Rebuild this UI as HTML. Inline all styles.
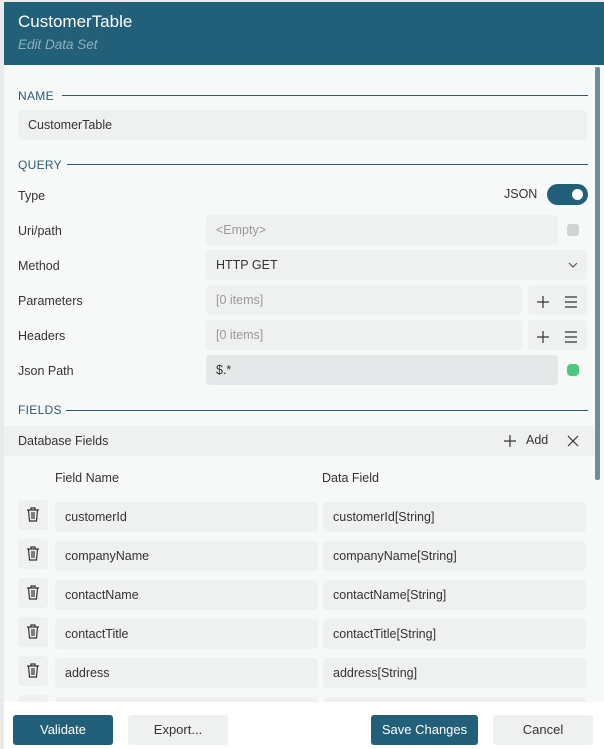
<!DOCTYPE html>
<html><head><style>
*{box-sizing:border-box;margin:0;padding:0}
body{width:604px;height:749px;background:#e9ebeb;font-family:"Liberation Sans",sans-serif;font-size:12.5px;color:#333;position:relative;overflow:hidden}
.dlg{position:absolute;left:4px;top:2px;width:600px;height:747px;background:#f7f9f9}
.hdr{position:absolute;left:0;top:0;width:600px;height:63px;background:#225f78}
.t1{position:absolute;left:14px;top:10px;color:#fff;font-size:17px}
.t2{position:absolute;left:14px;top:35px;color:#8fb0bf;font-size:13.5px;font-style:italic}
.a{position:absolute}
.sec{position:absolute;left:14px;font-size:12px;color:#2c5a6c;letter-spacing:.3px}
.line{position:absolute;height:1px;background:#2c5a6c}
.in{position:absolute;background:#eff1f1;border-radius:4px;padding-left:10px;line-height:30px;height:30px;color:#333}
.lbl{position:absolute;left:14px;color:#333}
.ph{color:#999}
.btn{position:absolute;top:713px;height:30px;border-radius:3px;line-height:30px;text-align:center;font-size:13px}
</style></head><body>
<div class="dlg">
<div class="hdr"><div class="t1">CustomerTable</div><div class="t2">Edit Data Set</div></div>
<div class="a" style="left:591px;top:65px;width:5px;height:413px;background:#6f8d99;border-radius:2px"></div>
<div class="sec" style="top:87px">NAME</div><div class="line" style="left:58px;top:93px;width:526px"></div>
<div class="in" style="left:14px;top:108px;width:569px">CustomerTable</div>
<div class="sec" style="top:156px">QUERY</div><div class="line" style="left:63px;top:162px;width:521px"></div>
<div class="lbl" style="top:187px">Type</div>
<div class="a" style="left:500px;top:185px">JSON</div>
<div class="a" style="left:543px;top:182px;width:41px;height:21px;border-radius:11px;background:#225f78"><div class="a" style="left:25px;top:5px;width:11px;height:11px;border-radius:50%;background:#fff"></div></div>
<div class="lbl" style="top:222px">Uri/path</div>
<div class="in" style="left:202px;top:213px;width:352px"><span class="ph">&lt;Empty&gt;</span></div>
<div class="a" style="left:563px;top:222px;width:12px;height:12px;border-radius:3px;background:#cfd3d4"></div>
<div class="lbl" style="top:257px">Method</div>
<div class="in" style="left:202px;top:248px;width:381px">HTTP GET<svg class="a" style="left:362px;top:11px" width="10" height="8"><path d="M1 2l4 4 4-4" fill="none" stroke="#555" stroke-width="1.2"/></svg></div>
<div class="lbl" style="top:292px">Parameters</div>
<div class="in" style="left:202px;top:283px;width:316px"><span class="ph">[0 items]</span></div>
<div class="in" style="left:524px;top:283px;width:59px"></div>
<div class="lbl" style="top:327px">Headers</div>
<div class="in" style="left:202px;top:318px;width:316px"><span class="ph">[0 items]</span></div>
<div class="in" style="left:524px;top:318px;width:59px"></div>
<svg class="a" style="left:530px;top:289px" width="50" height="60"><g stroke="#333" stroke-width="1.2"><path d="M9 5v12M3 11h12M31 6h12M31 11h12M31 16h12"/><path d="M9 40v12M3 46h12M31 41h12M31 46h12M31 51h12"/></g></svg>
<div class="lbl" style="top:362px">Json Path</div>
<div class="in" style="left:202px;top:353px;width:352px;background:#e4e8e9">$.*</div>
<div class="a" style="left:563px;top:362px;width:12px;height:12px;border-radius:4px;background:#4cc97b"></div>
<div class="sec" style="top:401px">FIELDS</div><div class="line" style="left:62px;top:408px;width:522px"></div>
<div class="a" style="left:0;top:424px;width:590px;height:30px;background:#eff1f1"></div>
<div class="a" style="left:14px;top:432px">Database Fields</div>
<svg class="a" style="left:500px;top:432px" width="80" height="14"><g stroke="#333" stroke-width="1.2"><path d="M6 1v12M0 7h12M64 2l10 10M74 2l-10 10"/></g></svg>
<div class="a" style="left:522px;top:431px">Add</div>
<div class="a" style="left:51px;top:469px">Field Name</div>
<div class="a" style="left:318px;top:469px">Data Field</div>
<div id="rows"></div>
<div class="a" style="left:0;top:700px;width:600px;height:47px;background:#fff"></div>
<div class="btn" style="left:9px;width:100px;background:#225f78;color:#fff">Validate</div>
<div class="btn" style="left:124px;width:100px;background:#eff1f1">Export...</div>
<div class="btn" style="left:367px;width:107px;background:#225f78;color:#fff">Save Changes</div>
<div class="btn" style="left:489px;width:100px;background:#eff1f1">Cancel</div>
</div>
<script>
var n=["customerId","companyName","contactName","contactTitle","address",""],h="";
n.forEach(function(s,i){var y=500+i*39;
h+='<div class="in" style="left:14px;top:'+(y-2)+'px;width:30px;padding:0"><svg style="position:absolute;left:8px;top:7px" width="14" height="16"><g fill="none" stroke="#333" stroke-width="1.2"><path d="M1 3h12M5 3V1h4v2M2.5 3l1 11h7l1-11M6 5v7M8 5v7"/></g></svg></div>';
h+='<div class="in" style="left:51px;top:'+y+'px;width:263px">'+s+'</div>';
h+='<div class="in" style="left:319px;top:'+y+'px;width:263px">'+(s?s+'[String]':'')+'</div>';});
document.getElementById('rows').innerHTML=h;
</script>
</body></html>
